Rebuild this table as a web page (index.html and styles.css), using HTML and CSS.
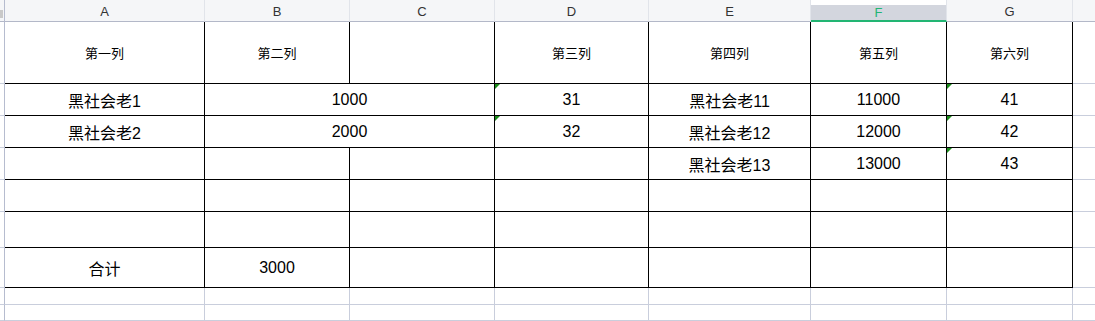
FILE: index.html
```html
<!DOCTYPE html>
<html>
<head>
	<title>sheet</title>
	<meta charset="utf8">
	<link rel="stylesheet" href="styles.css">
</head>
<body>
<div class="sheet">
	<!-- column letters -->
	<div class="hd corner"><div class="knob"></div></div>
	<div class="hd">A</div>
	<div class="hd">B</div>
	<div class="hd">C</div>
	<div class="hd">D</div>
	<div class="hd">E</div>
	<div class="hd sel">F</div>
	<div class="hd">G</div>
	<div class="hd last"></div>

	<!-- row 1: titles -->
	<div class="rh"></div>
	<div class="c small">第一列</div>
	<div class="c small">第二列</div>
	<div class="c small"></div>
	<div class="c small">第三列</div>
	<div class="c small">第四列</div>
	<div class="c small">第五列</div>
	<div class="c small">第六列</div>
	<div class="g last"></div>

	<!-- row 2 -->
	<div class="rh"></div>
	<div class="c">黑社会老1</div>
	<div class="c span2">1000</div>
	<div class="c"><span class="tri"></span>31</div>
	<div class="c">黑社会老11</div>
	<div class="c">11000</div>
	<div class="c"><span class="tri"></span>41</div>
	<div class="g last"></div>

	<!-- row 3 -->
	<div class="rh"></div>
	<div class="c">黑社会老2</div>
	<div class="c span2">2000</div>
	<div class="c"><span class="tri"></span>32</div>
	<div class="c">黑社会老12</div>
	<div class="c">12000</div>
	<div class="c"><span class="tri"></span>42</div>
	<div class="g last"></div>

	<!-- row 4 -->
	<div class="rh"></div>
	<div class="c"></div>
	<div class="c"></div>
	<div class="c"></div>
	<div class="c"></div>
	<div class="c">黑社会老13</div>
	<div class="c">13000</div>
	<div class="c"><span class="tri"></span>43</div>
	<div class="g last"></div>

	<!-- row 5 -->
	<div class="rh"></div>
	<div class="c"></div>
	<div class="c"></div>
	<div class="c"></div>
	<div class="c"></div>
	<div class="c"></div>
	<div class="c"></div>
	<div class="c"></div>
	<div class="g last"></div>

	<!-- row 6 -->
	<div class="rh"></div>
	<div class="c"></div>
	<div class="c"></div>
	<div class="c"></div>
	<div class="c"></div>
	<div class="c"></div>
	<div class="c"></div>
	<div class="c"></div>
	<div class="g last"></div>

	<!-- row 7: total -->
	<div class="rh"></div>
	<div class="c">合计</div>
	<div class="c">3000</div>
	<div class="c"></div>
	<div class="c"></div>
	<div class="c"></div>
	<div class="c"></div>
	<div class="c"></div>
	<div class="g last"></div>

	<!-- empty rows under the table -->
	<div class="rh"></div>
	<div class="g"></div>
	<div class="g"></div>
	<div class="g"></div>
	<div class="g"></div>
	<div class="g"></div>
	<div class="g"></div>
	<div class="g"></div>
	<div class="g last"></div>

	<div class="rh"></div>
	<div class="g"></div>
	<div class="g"></div>
	<div class="g"></div>
	<div class="g"></div>
	<div class="g"></div>
	<div class="g"></div>
	<div class="g"></div>
	<div class="g last"></div>
</div>
</body>
</html>
```

FILE: styles.css
```css
body {
	margin: 0;
	background: #fff;
	font-family: "Liberation Sans", "Noto Sans CJK SC", sans-serif;
}

.sheet {
	display: grid;
	grid-template-columns: 5px 200px 145px 145px 154px 162px 136px 126px 1fr;
	grid-template-rows: 22px 62px 32px 32px 32px 32px 36px 40px 17px 1fr;
	height: 321px;
	overflow: hidden;
}

.sheet > div {
	box-sizing: border-box;
	border-right: 1px solid #c9cedc;
	border-bottom: 1px solid #c9cedc;
}

/* column header strip */
.hd {
	background: #f5f6f8;
	border-right-color: #e1e4ea !important;
	border-bottom-color: #b3b8c8 !important;
	color: #333;
	font-size: 13px;
	display: flex;
	align-items: center;
	justify-content: center;
	padding-top: 2px;
}
.hd.corner {
	border-right-color: #b6bccf !important;
	align-items: flex-start;
	justify-content: flex-start;
	padding-top: 0;
}
.knob {
	margin-top: 10px;
	width: 3px;
	height: 8px;
	background: #c9c9c9;
}
.hd.sel {
	padding-top: 5px;
	background: #f5f6f8 linear-gradient(#d3d6de, #d3d6de) content-box;
	border-bottom: 2px solid #22b573 !important;
	color: #22b573;
}
.sheet > .last {
	border-right: none;
}

/* row gutter */
.rh {
	border-right-color: #b6bccf !important;
}

/* bordered cells */
.sheet > .c {
	position: relative;
	border-right: 1px solid #000;
	border-bottom: 1px solid #000;
	display: flex;
	align-items: center;
	justify-content: center;
	font-size: 16px;
	color: #000;
}
.sheet > .small {
	font-size: 13px;
}
.span2 {
	grid-column: span 2;
}

/* green mark in the corner */
.tri {
	position: absolute;
	top: 0;
	left: 0;
	width: 0;
	height: 0;
	border-top: 5px solid #1a8c1a;
	border-right: 5px solid transparent;
}
```
